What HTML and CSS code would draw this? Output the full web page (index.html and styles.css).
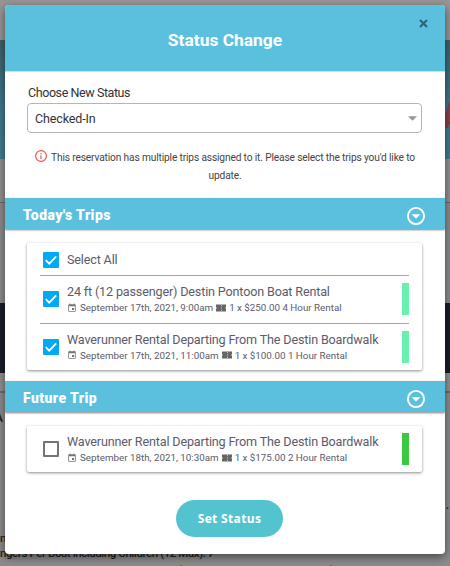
FILE: index.html
```html
<!DOCTYPE html>
<html lang="en">
    <head>
        <meta charset="UTF-8">
        <meta name="viewport" content="width=device-width, initial-scale=1.0">
        <title>Status Change</title>
        <link rel="stylesheet" href="styles.css">
    </head>
    <body>
        <!-- icons used more than once -->
        <svg class="icon-defs" width="0" height="0">
            <symbol id="icon-check" viewBox="0 0 16 16">
                <path d="M2.8 8.2l3.4 3.4 7-7.2" fill="none" stroke="#fff" stroke-width="1.8"/>
            </symbol>
            <symbol id="icon-calendar" viewBox="0 0 24 24">
                <path d="M17 12h-5v5h5v-5zM16 1v2H8V1H6v2H5c-1.110 0-2 .9-2 2v14c0 1.100.89 2 2 2h14c1.100 0 2-.9 2-2V5c0-1.100-.9-2-2-2h-1V1h-2zm3 18H5V8h14v11z"/>
            </symbol>
            <symbol id="icon-ticket" viewBox="0 0 10 8">
                <path d="M0 .5h10V3.400h-.7v1.200h.7v2.900H0V4.600h.7V3.400H0z"/>
                <path d="M5.500 1v1.200M5.500 3.400v1.200M5.500 5.800V7" stroke="#ccc" stroke-width=".9"/>
            </symbol>
            <symbol id="icon-toggle" viewBox="0 0 20 20">
                <circle cx="10" cy="10" r="8.100" fill="none" stroke="#fff" stroke-width="1.900"/>
                <path d="M5.600 8.200h8.800L10 12.400z" fill="#fff"/>
            </symbol>
        </svg>

        <div class="page">
            <div class="page-top"></div>
            <div class="page-banner"><span class="banner-mark"></span></div>
            <div class="page-row"></div>
            <div class="page-gap"></div>
            <div class="page-dark"></div>
            <div class="page-strip"></div>
            <div class="page-info">
                <p class="info-name">A</p>
                <p class="info-dot">.</p>
                <p class="info-line">n(</p>
                <p class="info-line">ngers Per Boat including Children (12 Max): 7</p>
                <p class="info-line last">ib Are Born Before January 1st, 1988 (Does NOT need Boater License)</p>
            </div>
        </div>

        <div class="modal">
            <header class="modal-header">
                <h1>Status Change</h1>
                <button class="close" aria-label="Close">
                    <svg width="9" height="9" viewBox="0 0 9 9"><path d="M1 1l7 7M8 1L1 8" stroke="#2b6477" stroke-width="2.100"/></svg>
                </button>
            </header>

            <div class="status-field">
                <label>Choose New Status</label>
                <div class="select">
                    <span>Checked-In</span>
                    <svg width="9" height="5" viewBox="0 0 9 5"><path d="M0 .3h9L4.500 4.800z" fill="#949494"/></svg>
                </div>
            </div>

            <p class="notice">
                <svg class="notice-icon" width="12" height="12" viewBox="0 0 12 12">
                    <circle cx="6" cy="6" r="5.400" fill="none" stroke="#f0524b" stroke-width="1.200"/>
                    <path d="M6 5.300v3.700M6 2.900v1.300" stroke="#f0524b" stroke-width="1.200"/>
                </svg>
                <span>This reservation has multiple trips assigned to it. Please select the trips you'd like to</span>
                <span class="notice-end">update.</span>
            </p>

            <div class="section-bar">
                <h2>Today's Trips</h2>
                <svg width="20" height="20"><use href="#icon-toggle"/></svg>
            </div>
            <div class="card">
                <div class="select-all">
                    <span class="checkbox checked"><svg width="16" height="16"><use href="#icon-check"/></svg></span>
                    <span class="trip-name">Select All</span>
                </div>
                <div class="trip">
                    <span class="checkbox checked"><svg width="16" height="16"><use href="#icon-check"/></svg></span>
                    <div class="trip-body">
                        <p class="trip-name">24 ft (12 passenger) Destin Pontoon Boat Rental</p>
                        <p class="trip-meta">
                            <svg class="calendar" width="10" height="10"><use href="#icon-calendar"/></svg>
                            <span>September 17th, 2021, 9:00am</span>
                            <svg class="ticket" width="10" height="8"><use href="#icon-ticket"/></svg>
                            <span>1 x $250.00 4 Hour Rental</span>
                        </p>
                    </div>
                    <span class="marker"></span>
                </div>
                <div class="trip">
                    <span class="checkbox checked"><svg width="16" height="16"><use href="#icon-check"/></svg></span>
                    <div class="trip-body">
                        <p class="trip-name">Waverunner Rental Departing From The Destin Boardwalk</p>
                        <p class="trip-meta">
                            <svg class="calendar" width="10" height="10"><use href="#icon-calendar"/></svg>
                            <span>September 17th, 2021, 11:00am</span>
                            <svg class="ticket" width="10" height="8"><use href="#icon-ticket"/></svg>
                            <span>1 x $100.00 1 Hour Rental</span>
                        </p>
                    </div>
                    <span class="marker"></span>
                </div>
            </div>

            <div class="section-bar">
                <h2>Future Trip</h2>
                <svg width="20" height="20"><use href="#icon-toggle"/></svg>
            </div>
            <div class="card">
                <div class="trip">
                    <span class="checkbox"></span>
                    <div class="trip-body">
                        <p class="trip-name">Waverunner Rental Departing From The Destin Boardwalk</p>
                        <p class="trip-meta">
                            <svg class="calendar" width="10" height="10"><use href="#icon-calendar"/></svg>
                            <span>September 18th, 2021, 10:30am</span>
                            <svg class="ticket" width="10" height="8"><use href="#icon-ticket"/></svg>
                            <span>1 x $175.00 2 Hour Rental</span>
                        </p>
                    </div>
                    <span class="marker future"></span>
                </div>
            </div>

            <button class="btn">Set Status</button>
        </div>
    </body>
</html>
```
FILE: styles.css
```css
* {
    margin: 0;
    padding: 0;
    box-sizing: border-box;
}

body {
    height: 566px;
    padding: 5px;
    background: #8c8c8c;
    color: #333;
    font-family: Roboto, sans-serif;
    position: relative;
    overflow: hidden;
}

svg {
    display: block;
    flex: none;
}

.icon-defs {
    position: absolute;
}

/* dimmed page behind the modal */
.page {
    position: absolute;
    inset: 0;
    overflow: hidden;
    color: #222;
}

.page-top {
    height: 40px;
    background: #969696;
}

.page-banner {
    height: 119px;
    background: linear-gradient(#3f6069, #3f7890 55%, #427d92);
    display: flex;
    justify-content: flex-end;
    align-items: center;
}

.banner-mark {
    width: 8px;
    height: 28px;
    margin-right: -3px;
    margin-top: 28px;
    background: #87434a;
    transform: skewX(-20deg);
}

.page-row {
    height: 44px;
    background: #919191;
    border-bottom: 1px solid #6c6c6c;
}

.page-gap {
    height: 100px;
    background: #8c8c8c;
}

.page-dark {
    height: 70px;
    background: #1b1e2a;
}

.page-strip {
    height: 20px;
    background: #919191;
    border-bottom: 2px solid #6c6c6c;
}

.page-info {
    font-size: 12px;
    line-height: 18px;
    font-weight: 500;
}

.info-name {
    height: 88px;
    padding-top: 16px;
    margin-left: -5px;
}

.info-dot {
    height: 48px;
    padding-top: 15px;
    padding-right: 1px;
    text-align: right;
}

.info-line {
    height: 15px;
    font-size: 11.500px;
    letter-spacing: -0.42px;
    white-space: nowrap;
}

.info-line.last {
    padding-top: 2px;
    letter-spacing: -0.38px;
}

.modal {
    width: 440px;
    height: 549px;
    background: #fff;
    border-radius: 4px;
    box-shadow: 0 3px 10px rgba(0, 0, 0, 0.5);
    position: relative;
    overflow: hidden;
    display: flex;
    flex-direction: column;
}

.modal-header {
    height: 66px;
    flex: none;
    display: flex;
    align-items: center;
    justify-content: center;
    background: #5bc0de;
    box-shadow: 0 1px 0 #d4dcdf;
}

.modal-header h1 {
    padding-top: 4px;
    font-size: 17.400px;
    font-weight: 700;
    color: #fff;
}

.close {
    position: absolute;
    top: 14px;
    right: 17px;
    border: none;
    background: none;
    cursor: pointer;
}

.status-field {
    padding: 14px 23px 0 22px;
}

.status-field label {
    display: block;
    height: 18px;
    padding-left: 1px;
    font-size: 12.500px;
    letter-spacing: -0.42px;
    line-height: 16px;
}

.select {
    height: 30px;
    padding: 0 4px 0 7px;
    display: flex;
    align-items: center;
    justify-content: space-between;
    border: 1px solid #b5b5b5;
    border-radius: 4px;
    font-size: 12.500px;
    letter-spacing: -0.12px;
}

.notice {
    height: 65px;
    padding-top: 16px;
    display: flex;
    flex-wrap: wrap;
    justify-content: center;
    align-content: flex-start;
    column-gap: 4px;
    font-size: 10.200px;
    letter-spacing: -0.15px;
    line-height: 18px;
    color: #444;
    white-space: nowrap;
}

.notice-icon {
    margin-top: 1px;
}

.notice-end {
    width: 100%;
    text-align: center;
}

.section-bar {
    height: 31px;
    flex: none;
    padding: 4px 19px 0 18px;
    display: flex;
    align-items: center;
    justify-content: space-between;
    background: #5bc0de;
    box-shadow: 0 1px 2px rgba(0, 0, 0, 0.5);
}

.section-bar h2 {
    margin-top: -2px;
    font-size: 14px;
    font-weight: 900;
    letter-spacing: 0.43px;
    color: #fff;
}

.card {
    margin: 14px 23px 11px 22px;
    padding: 0 13px;
    border-radius: 2px;
    box-shadow: 0 1px 3px rgba(0, 0, 0, 0.45);
}

.select-all,
.trip {
    display: flex;
    align-items: center;
    padding-left: 3px;
}

.select-all {
    height: 32px;
    padding-top: 1px;
}

.trip {
    height: 46px;
}

.select-all + .trip,
.trip + .trip {
    height: 47.500px;
    border-top: 1px solid #a5a5a5;
}

.checkbox {
    width: 16px;
    height: 16px;
    flex: none;
    margin-right: 8px;
    border: 2px solid #757575;
    border-radius: 1px;
}

.checkbox.checked {
    border: none;
    background: #03a9f4;
}

.trip-body {
    flex: 1;
    padding-top: 1px;
}

.trip-name {
    font-size: 12.600px;
    letter-spacing: -0.16px;
    line-height: 16px;
    color: #5b5b6b;
    white-space: nowrap;
}

.trip-meta {
    display: flex;
    align-items: center;
    height: 15px;
    font-size: 9.800px;
    color: #5b5b6b;
    white-space: nowrap;
}

.calendar {
    margin-right: 3px;
    fill: #757575;
}

.ticket {
    margin: 0 3px;
    fill: #666;
}

.marker {
    width: 7px;
    height: 32px;
    background: #69f0ae;
}

.marker.future {
    background: #3ac940;
}

.btn {
    width: 107px;
    height: 37px;
    margin: 17px 0 0 171px;
    border: none;
    border-radius: 19px;
    background: #53c3d0;
    color: #fff;
    font-family: 'Open Sans', sans-serif;
    font-size: 12px;
    font-weight: 700;
    letter-spacing: 0.35px;
    cursor: pointer;
}
```
